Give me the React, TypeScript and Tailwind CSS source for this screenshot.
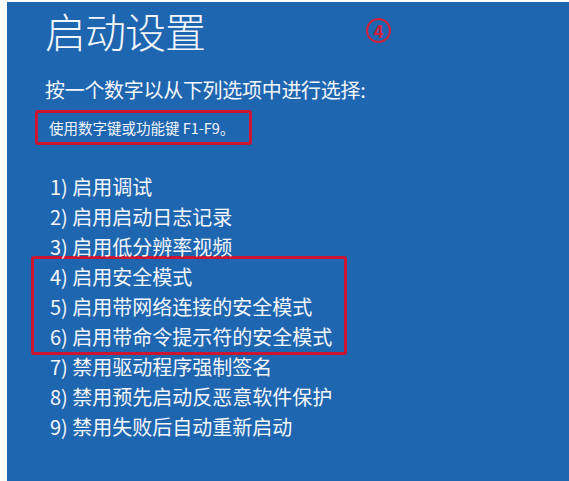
import React from 'react';

const options = [
  '启用调试',
  '启用启动日志记录',
  '启用低分辨率视频',
  '启用安全模式',
  '启用带网络连接的安全模式',
  '启用带命令提示符的安全模式',
  '禁用驱动程序强制签名',
  '禁用预先启动反恶意软件保护',
  '禁用失败后自动重新启动',
];

const fontStack = { fontFamily: '"Noto Sans CJK SC", "Noto Sans", sans-serif' };

const Option: React.FC<{ n: number; label: string }> = ({ n, label }) => (
  <div className="h-[30px] leading-[30px] text-[20px] font-normal whitespace-nowrap">
    {n}) {label}
  </div>
);

export default function App() {
  return (
    <div className="w-[569px] h-[481px] bg-white pl-[7px] pt-[2px] overflow-hidden" style={fontStack}>
      <div className="relative h-full bg-[#1f66b1] text-[#f3f6fb] pt-[4px] pl-[38px]">
        <h1 className="h-[48px] leading-[48px] text-[41px] font-light tracking-[-1px]">启动设置</h1>

        {/* step marker */}
        <div className="absolute left-[359px] top-[16px] w-[25px] h-[25px] rounded-full border-2 border-[#d2203a] flex items-center justify-center text-[#d2203a] text-[17px] font-bold leading-none">
          4
        </div>

        <p className="mt-[23px] h-[26px] leading-[26px] text-[20px] font-normal tracking-[-0.3px]">按一个数字以从下列选项中进行选择:</p>

        <div className="mt-[7px] -ml-[10px] w-[217px] h-[35px] border-[3px] border-[#cc1531] rounded-[3px] pl-[11px] text-[14.5px] leading-[29px] whitespace-nowrap">
          使用数字键或功能键 F1-F9。
        </div>

        <div className="mt-[27px] pl-[5px]">
          {options.slice(0, 3).map((o, i) => (
            <Option key={o} n={i + 1} label={o} />
          ))}
          <div className="-mt-[6px] -mb-[3px] -ml-[19px] w-[316px] border-[3px] border-[#cc1531] rounded-[3px] pt-[3px] pl-[16px]">
            {options.slice(3, 6).map((o, i) => (
              <Option key={o} n={i + 4} label={o} />
            ))}
          </div>
          {options.slice(6).map((o, i) => (
            <Option key={o} n={i + 7} label={o} />
          ))}
        </div>
      </div>
    </div>
  );
}
